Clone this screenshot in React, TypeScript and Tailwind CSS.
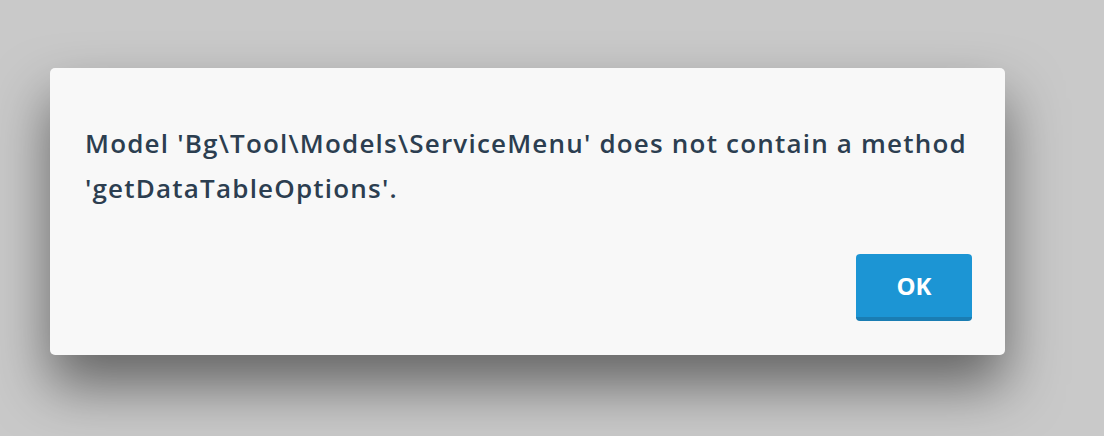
export default function App() {
  return (
    <div className="flex h-[436px] w-[1104px] items-start bg-[#c9c9c9] pl-[50px] pt-[68px] font-['Open_Sans','Noto_Sans',sans-serif]">
      <div className="flex w-[955px] flex-col rounded-[5px] bg-[#f8f8f8] px-[35px] pb-[34px] pt-[53px] shadow-[0_30px_55px_rgba(0,0,0,0.5)]">
        <p className="text-[26px] font-semibold leading-[45px] tracking-[1.2px] text-[#2c3e50]">
          Model 'Bg\Tool\Models\ServiceMenu' does not contain a method 'getDataTableOptions'.
        </p>
        <div className="-mr-[2px] mt-[43px] flex justify-end">
          <button
            type="button"
            className="h-[67px] w-[116px] rounded-[4px] border-b-4 border-[#1a7db3] bg-[#1c95d4] text-[24px] font-bold text-white"
          >
            OK
          </button>
        </div>
      </div>
    </div>
  );
}
